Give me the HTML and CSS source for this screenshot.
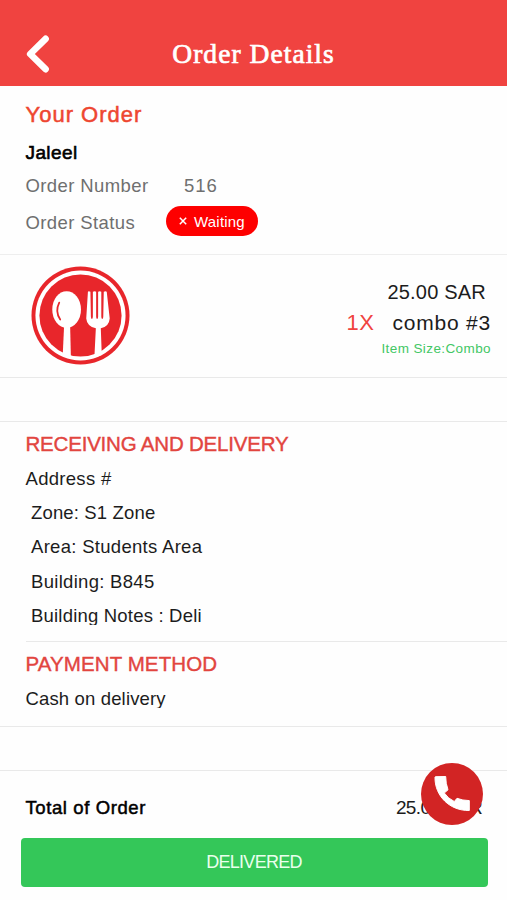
FILE: index.html
```html
<!DOCTYPE html>
<html lang="en">
<head>
<meta charset="utf-8">
<title>Order Details</title>
<link rel="stylesheet" href="styles.css">
</head>
<body>
<header class="topbar">
  <svg class="back" viewBox="0 0 26 40" aria-hidden="true"><path d="M20.6 4.800 L5.200 20 L20.600 35.200"/></svg>
  <h1>Order Details</h1>
</header>
<main>
  <section class="summary">
    <h2 class="your-order">Your Order</h2>
    <div class="customer">Jaleel</div>
    <div class="field number"><span class="label">Order Number</span><span class="value">516</span></div>
    <div class="field status"><span class="label">Order Status</span>
      <span class="badge"><svg viewBox="0 0 8 8" aria-hidden="true"><path d="M.8.8 7.2 7.2M7.2.8.8 7.2"/></svg><span>Waiting</span></span>
    </div>
  </section>
  <section class="item">
    <svg class="logo" viewBox="0 0 100 100" aria-hidden="true">
      <circle class="red" cx="50" cy="50" r="49.500"/>
      <circle class="white" cx="50" cy="50" r="45.500"/>
      <circle class="red" cx="50" cy="50" r="41.500"/>
      <ellipse class="white" cx="36" cy="44" rx="14.500" ry="18.500"/>
      <path class="white" d="M33.500 59 H39.500 L40.300 93 L32 91Z"/>
      <path class="groove" d="M28.500 37 Q24 46 29.500 54"/>
      <path class="white" d="M57.500 26 Q58 25 60 26 L60.500 51 Q60.500 53.500 61.500 53.500 Q62.500 53.500 62.500 51 L62.500 26 Q64.500 25 65.800 26 V51 Q65.800 53.500 66.800 53.500 Q67.800 53.500 67.800 51 V26 Q69.500 25 71 26 V51 Q71 53.500 72 53.500 Q73 53.500 73 51 L73.500 26 Q75.500 25 76.500 26 L79.500 53 Q79 61 70.500 63 L71.500 90 L64 92.500 L65.500 63 Q56.500 61 55.800 53Z"/>
    </svg>
    <div class="item-text">
      <div class="price">25.00 SAR</div>
      <div class="item-name"><span class="qty">1X</span><span>combo #3</span></div>
      <div class="size">Item Size:Combo</div>
    </div>
  </section>
  <div class="gap"></div>
  <section class="delivery">
    <h2>RECEIVING AND DELIVERY</h2>
    <div class="line address">Address #</div>
    <div class="line sub zone">Zone: S1 Zone</div>
    <div class="line sub">Area: Students Area</div>
    <div class="line sub">Building: B845</div>
    <div class="line sub notes">Building Notes : Deli</div>
  </section>
  <section class="payment">
    <h2>PAYMENT METHOD</h2>
    <div class="line cash">Cash on delivery</div>
  </section>
  <div class="gap"></div>
  <section class="total">
    <strong>Total of Order</strong>
    <span class="amount">25.00 SAR</span>
    <div class="call"><svg viewBox="0 0 62 62" aria-hidden="true"><path d="M14.500 13.700 L24.700 13.500 Q24.700 20.500 27 26.800 L23.300 30 Q27 35.500 33.300 38.500 L36 35.300 Q41.500 37.500 48.300 37.600 V47.500 C29 48 13.500 33 14 14Z"/></svg></div>
  </section>
  <button class="delivered" type="button">DELIVERED</button>
</main>
</body>
</html>
```
FILE: styles.css
```css
* { box-sizing: border-box; }
body {
  margin: 0;
  background: #fefefe;
  color: #1c1c1c;
  font: 18.5px "Liberation Sans", Arial, sans-serif;
}
h1, h2 { margin: 0; font-weight: 400; }
svg { display: block; }

.topbar {
  display: grid;
  grid-template-columns: 60px 1fr 60px;
  align-items: center;
  height: 86px;
  padding-top: 21px;
  background: #f04340;
}
.back { width: 26px; height: 40px; margin-left: 25px; }
.back path { fill: none; stroke: #fff; stroke-width: 6.6; stroke-linecap: round; stroke-linejoin: round; }
.topbar h1 {
  color: #fff;
  font: 27.5px/32px "Liberation Serif", "Times New Roman", serif;
  letter-spacing: 1.05px;
  text-align: center;
  -webkit-text-stroke: .7px #fff;
}

.summary { height: 169px; padding: 9px 0 0 25.5px; border-bottom: 1px solid #eee; }
.your-order { color: #ee4630; font-size: 22px; line-height: 39px; letter-spacing: 1px; -webkit-text-stroke: .5px; }
.customer { color: #000; font-size: 19px; line-height: 37px; letter-spacing: .4px; -webkit-text-stroke: .6px; }
.field { display: flex; align-items: center; color: #6f6f6f; letter-spacing: .4px; }
.number { height: 29px; }
.number .label { width: 158.5px; }
.number .value { letter-spacing: 1px; }
.status { height: 45px; }
.status .label { width: 140.5px; }
.badge {
  display: flex;
  align-items: center;
  gap: 7px;
  width: 92px;
  height: 30px;
  margin-top: -3px;
  padding-left: 13px;
  border-radius: 15px;
  background: #fe0000;
  color: #fff;
  font-size: 15px;
  letter-spacing: .2px;
}
.badge svg { width: 8px; height: 8px; }
.badge path { stroke: #fff; stroke-width: 1.5; }

.item {
  display: flex;
  justify-content: space-between;
  height: 123px;
  padding: 11px 16px 0 31px;
  border-bottom: 1px solid #e9e9e9;
}
.logo { width: 99px; height: 99px; }
.red { fill: #e8262b; }
.white { fill: #fff; }
.groove { fill: none; stroke: #e8262b; stroke-width: 1.8; stroke-linecap: round; }
.item-text { display: flex; flex-direction: column; align-items: flex-end; padding-top: 11px; }
.price { padding-right: 5px; font-size: 20px; line-height: 31px; letter-spacing: .2px; }
.item-name { display: flex; gap: 18px; font-size: 21px; line-height: 30px; letter-spacing: .8px; }
.qty { color: #f04340; font-size: 22px; letter-spacing: .5px; }
.size { color: #43c765; font-size: 13.5px; line-height: 22px; letter-spacing: .4px; }

.gap { height: 44px; border-bottom: 1px solid #e9e9e9; }

.delivery, .payment { padding-left: 25.5px; }
.delivery h2, .payment h2 { color: #e2453f; font-size: 20.5px; letter-spacing: -.2px; -webkit-text-stroke: .4px; }
.delivery { height: 219px; padding-top: 4px; }
.delivery h2 { line-height: 35px; margin-bottom: 1px; }
.line { line-height: 34.2px; letter-spacing: .3px; }
.sub { padding-left: 5.5px; }
.zone { letter-spacing: .15px; }
.notes { height: 26px; overflow: hidden; letter-spacing: .2px; }
.payment { position: relative; height: 86px; padding-top: 6px; border-bottom: 1px solid #e9e9e9; }
.payment::before { content: ""; position: absolute; top: 0; right: 0; left: 26px; height: 1px; background: #e9e9e9; }
.payment h2 { line-height: 34px; margin-bottom: 1px; letter-spacing: .1px; }
.cash { height: 26px; overflow: hidden; letter-spacing: .15px; }

.total {
  position: relative;
  display: flex;
  justify-content: space-between;
  align-items: center;
  height: 67px;
  padding: 6px 25px 0 25.5px;
}
.total strong { color: #000; font-weight: 400; letter-spacing: .6px; -webkit-text-stroke: .5px; }
.amount { font-size: 19px; letter-spacing: -.65px; }
.call {
  position: absolute;
  top: -8px;
  right: 24px;
  width: 62px;
  height: 62px;
  border-radius: 50%;
  background: #d22424;
}
.call path { fill: #fff; stroke: #fff; stroke-width: 1; stroke-linejoin: round; }
.delivered {
  display: block;
  width: 467px;
  height: 49px;
  margin-left: 20.5px;
  padding: 0;
  border: 0;
  border-radius: 4px;
  background: #34c759;
  color: #e9ffed;
  font: 18px "Liberation Sans", Arial, sans-serif;
  letter-spacing: -.7px;
}
```
